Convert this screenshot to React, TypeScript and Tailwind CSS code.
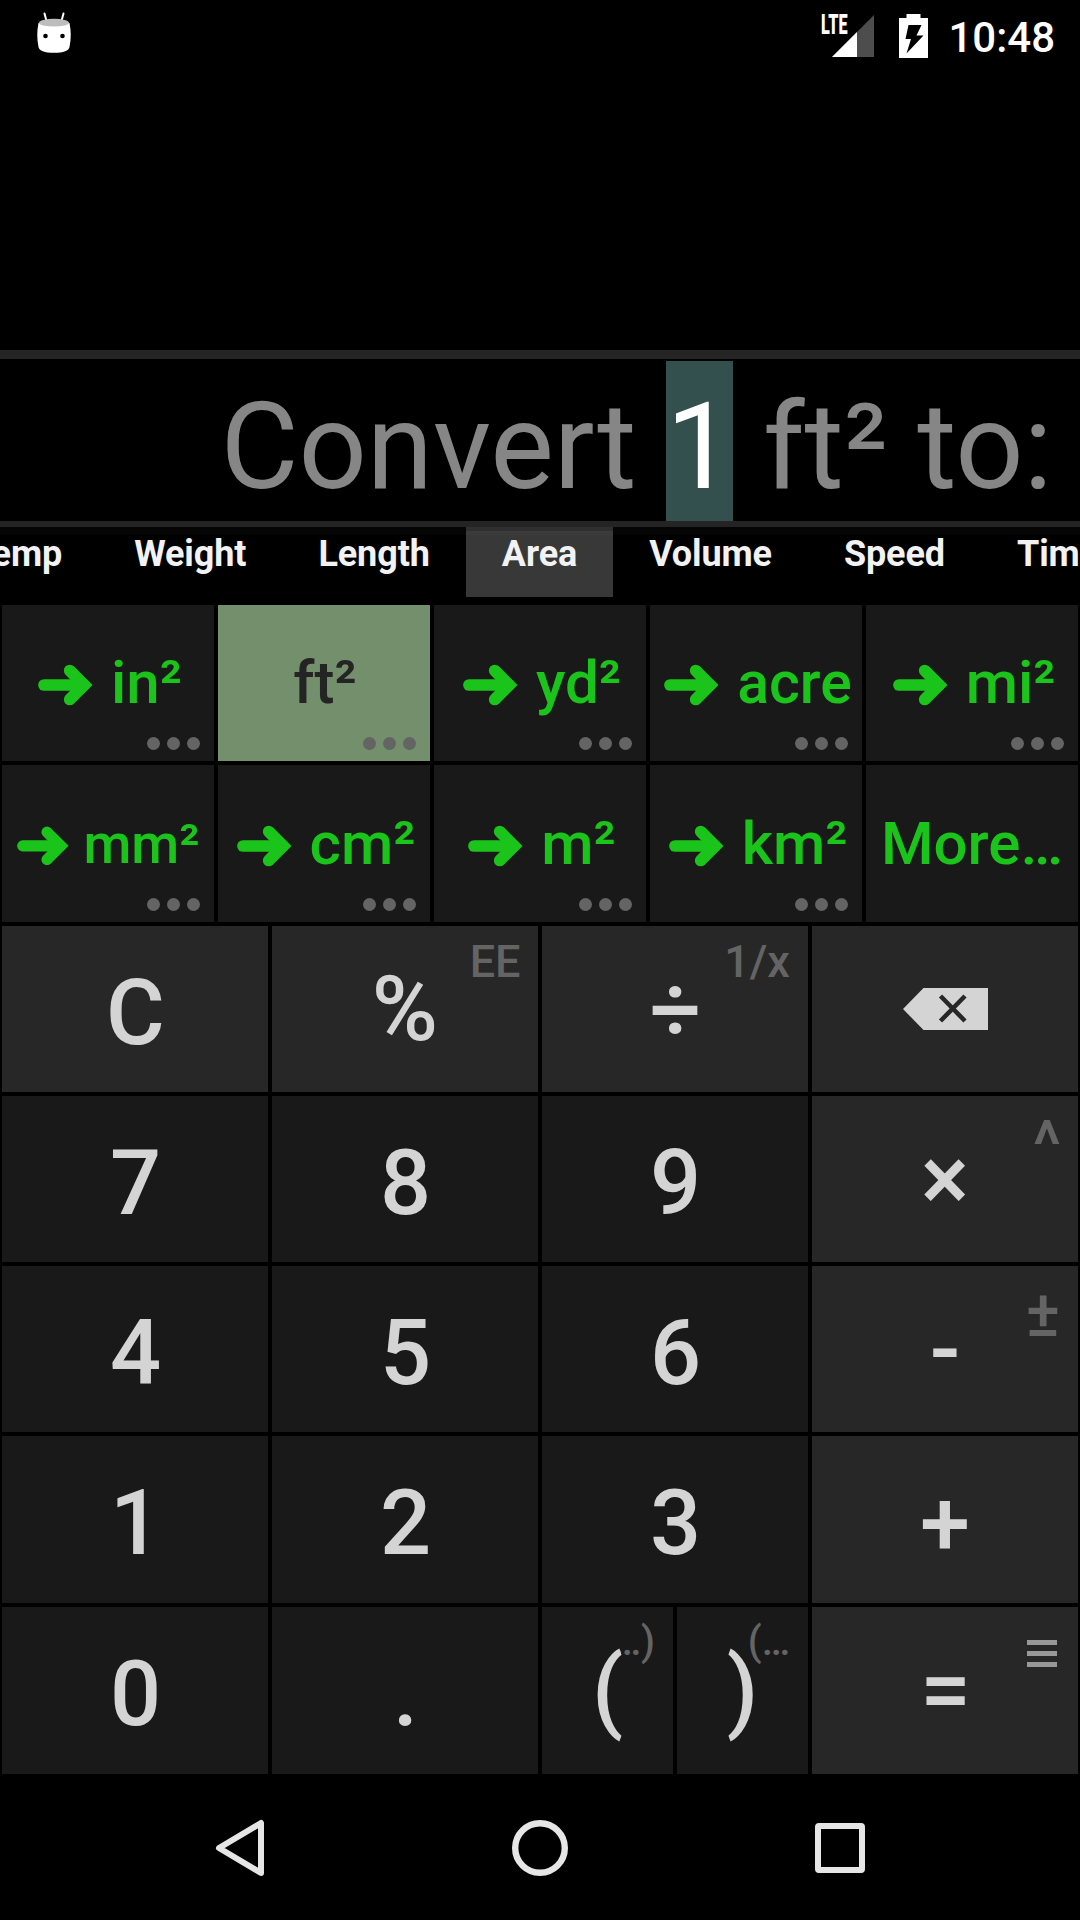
import type { ReactNode } from "react";

const TABS = ["Temp", "Weight", "Length", "Area", "Volume", "Speed", "Time"];

type Unit = { label: string; kind?: "selected" | "plain"; size?: string; arrow?: string; gap?: string };

const UNITS: Unit[] = [
  { label: "in²" },
  { label: "ft²", kind: "selected" },
  { label: "yd²" },
  { label: "acre", size: "text-[59px]" },
  { label: "mi²" },
  { label: "mm²", size: "text-[55px]", arrow: "w-[52px]", gap: "mr-[14px]" },
  { label: "cm²" },
  { label: "m²" },
  { label: "km²" },
  { label: "More…", kind: "plain" },
];

function Arrow({ width = "w-[55px]" }: { width?: string }) {
  return (
    <svg viewBox="0 0 55 42" className={`shrink-0 ${width}`} fill="none" stroke="#1bc41b" strokeWidth="11.7">
      <path d="M6 21H46" strokeLinecap="round" />
      <path d="M31.7 6.5L46.2 21L31.7 35.5" strokeLinecap="round" strokeLinejoin="miter" />
    </svg>
  );
}

function UnitKey({ label, kind, size = "text-[60px]", arrow, gap = "mr-[18px]" }: Unit) {
  const selected = kind === "selected";
  return (
    <div
      className={`relative flex items-center justify-center whitespace-nowrap font-medium leading-[70px] ${size} ${
        selected ? "bg-[#748f6b] pl-[2px] text-[#242424]" : "bg-[#191919] text-[#1bc41b]"
      } ${kind ? "" : arrow ? "pl-px" : "pl-1"}`}
    >
      {!kind && (
        <span className={`flex pt-1 ${gap}`}>
          <Arrow width={arrow} />
        </span>
      )}
      <span>{label}</span>
      {kind !== "plain" && (
        <span className="absolute bottom-[11px] right-[14px] flex gap-[7.3px]">
          <i className="size-[12.7px] rounded-full bg-[#646464]" />
          <i className="size-[12.7px] rounded-full bg-[#646464]" />
          <i className="size-[12.7px] rounded-full bg-[#646464]" />
        </span>
      )}
    </div>
  );
}

function Key({
  children,
  light,
  hint,
  half,
  pad = "pt-[9px] pl-px",
}: {
  children: ReactNode;
  light?: boolean;
  hint?: ReactNode;
  half?: boolean;
  pad?: string;
}) {
  return (
    <div
      className={`relative flex items-center justify-center text-[90px] font-medium leading-[106px] text-[#d4d4d4] ${pad} ${
        light ? "bg-[#272727]" : "bg-[#191919]"
      } ${half ? "col-span-1" : "col-span-2"}`}
    >
      {hint}
      <span className="relative">{children}</span>
    </div>
  );
}

function Hint({ children, place }: { children: ReactNode; place: string }) {
  return <span className={`absolute whitespace-nowrap text-[#646464] ${place}`}>{children}</span>;
}

function StatusBar() {
  return (
    <div className="flex h-[72px] items-start">
      <svg viewBox="0 0 40 44" className="ml-[34px] mt-[11px] h-[44px] w-[40px]">
        <path d="M10.5 2.5L12.5 10M29.5 2.5L27.5 10" stroke="#fff" strokeWidth="2" strokeLinecap="round" />
        <path d="M4.5 12Q2 24 4.5 36Q5.5 41.8 20 41.8Q34.5 41.8 35.5 36Q38 24 35.5 12Z" fill="#fff" />
        <ellipse cx="20" cy="11.7" rx="15" ry="3.9" fill="#bdbdbd" />
        <circle cx="11.5" cy="25" r="2.3" fill="#000" />
        <circle cx="28.5" cy="25" r="2.3" fill="#000" />
      </svg>
      <div className="relative ml-auto mr-[25px] mt-[14px] h-[44px] w-[54px]">
        <svg viewBox="0 0 54 44" className="h-[44px] w-[54px]">
          <path d="M54 1V43H12Z" fill="#4d4d4d" />
          <path d="M37 18V43H12Z" fill="#fff" />
        </svg>
        <span className="absolute left-px top-0 origin-left scale-x-[0.6] text-[27px] font-black leading-[22px] text-white">
          LTE
        </span>
      </div>
      <svg viewBox="0 0 29 44" className="mt-[14px] h-[44px] w-[29px]">
        <path d="M7.5 0H21.5V4H29V44H0V4H7.5Z" fill="#fff" />
        <path d="M9.5 11H22.5L17.5 21.5H24.5L7.500 39.500L12 25H6.500Z" fill="#000" />
      </svg>
      <span className="ml-[20px] mr-[25px] mt-[13px] text-[42px] font-medium leading-[50px] text-white">10:48</span>
    </div>
  );
}

export default function App() {
  return (
    <div className="flex h-[1920px] w-[1080px] flex-col overflow-hidden bg-black font-['Roboto',sans-serif]">
      <StatusBar />
      <div className="h-[278px]" />
      <div className="h-[9px] bg-[#242424]" />
      <div className="flex h-[162px] items-end justify-end whitespace-pre pr-[27.5px] pt-[2px] text-[120px] leading-[160px] tracking-[-0.12px] text-[#868686]">
        <span className="h-[160px] pt-[6px]">Convert </span>
        <span className="h-[160px] bg-[#34504e] pt-[6px] text-white">1</span>
        <span className="h-[160px] pt-[6px]"> ft² to:</span>
      </div>
      <div className="h-[6px] bg-[#242424]" />
      <div className="relative flex h-[78px] items-start justify-center overflow-hidden pr-[10px] text-[36px] font-bold leading-[42px] tracking-[-0.1px] text-[#f2f2f2]">
        {TABS.map((t) => (
          <div key={t} className={`h-[70px] shrink-0 px-[36px] pt-[6px] ${t === "Area" ? "bg-[#383838]" : ""}`}>
            {t}
          </div>
        ))}
        <div className="absolute inset-x-0 top-0 h-1 bg-[#050505]/25" />
        <div className="absolute inset-x-0 top-0 h-2 bg-white/2" />
      </div>
      <div className="grid h-[317px] grid-cols-5 grid-rows-[156px_157px] gap-1 px-[2px]">
        {UNITS.map((u) => (
          <UnitKey key={u.label} {...u} />
        ))}
      </div>
      <div className="mt-1 grid h-[848px] grid-cols-[131px_131px_131px_131px_131px_131px_131px_131px] grid-rows-[166px_166px_166px_167px_167px] gap-1 px-[2px]">
        <Key light>C</Key>
        <Key
          light
          pad="pt-[2px]"
          hint={<Hint place="right-[17.5px] top-[9px] text-[45px] leading-[53px]">EE</Hint>}
        >
          %
        </Key>
        <Key
          light
          pad="pt-[3px] pl-px"
          hint={<Hint place="right-[18px] top-[9px] text-[45px] leading-[53px]">1/x</Hint>}
        >
          ÷
        </Key>
        <Key light pad="">
          <svg viewBox="0 0 85 42" className="h-[42px] w-[85px]">
            <path d="M0 21L20.5 0H85V42H20.5Z" fill="#d4d4d4" />
            <path d="M37.5 8L62 33M62 8L37.5 33" stroke="#272727" strokeWidth="4.5" />
          </svg>
        </Key>
        <Key>7</Key>
        <Key>8</Key>
        <Key>9</Key>
        <Key
          light
          pad="pt-[1px]"
          hint={<Hint place="right-[17px] top-[12px] text-[66px] leading-[76px]">^</Hint>}
        >
          ×
        </Key>
        <Key>4</Key>
        <Key>5</Key>
        <Key>6</Key>
        <Key
          light
          pad="pt-[1px]"
          hint={<Hint place="right-[18px] top-[12px] text-[64px] leading-[74px]">±</Hint>}
        >
          -
        </Key>
        <Key>1</Key>
        <Key>2</Key>
        <Key>3</Key>
        <Key light pad="pt-[11px]">
          +
        </Key>
        <Key>0</Key>
        <Key>.</Key>
        <Key
          half
          pad="pt-[1px]"
          hint={<Hint place="right-[18px] top-[11px] text-[40px] leading-[47px]">…)</Hint>}
        >
          (
        </Key>
        <Key
          half
          pad="pt-[1px]"
          hint={<Hint place="right-[18px] top-[11px] text-[40px] leading-[47px]">(…</Hint>}
        >
          )
        </Key>
        <Key
          light
          pad="pt-[1px] pl-px"
          hint={
            <svg viewBox="0 0 30 27" className="absolute right-[21px] top-[33px] h-[27px] w-[30px]">
              <path d="M0 2.5H30M0 13.5H30M0 24.5H30" stroke="#989898" strokeWidth="5" />
            </svg>
          }
        >
          =
        </Key>
      </div>
      <div className="flex h-[146px] items-center justify-between px-[210px] pt-[2px]">
        <svg viewBox="0 0 60 60" className="size-[60px]" fill="none" stroke="#e6e6e6" strokeWidth="6">
          <path d="M51 5V55L9 30Z" strokeLinejoin="round" />
        </svg>
        <svg viewBox="0 0 60 60" className="size-[60px]" fill="none" stroke="#e6e6e6" strokeWidth="6.4">
          <circle cx="30" cy="30" r="24.8" />
        </svg>
        <svg viewBox="0 0 60 60" className="size-[60px]" fill="none" stroke="#e6e6e6" strokeWidth="6">
          <rect x="8" y="8" width="44" height="44" rx="1" strokeLinejoin="round" />
        </svg>
      </div>
    </div>
  );
}
